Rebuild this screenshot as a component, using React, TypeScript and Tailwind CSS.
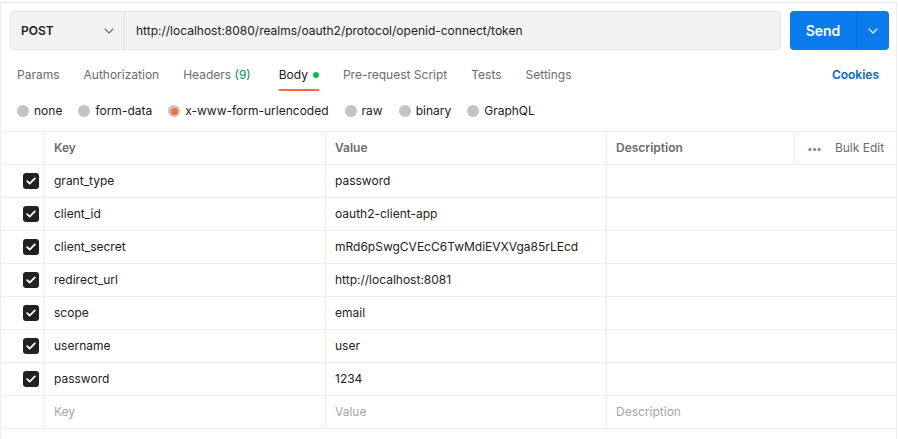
import React from "react";

const ROWS = [
  { key: "grant_type", value: "password" },
  { key: "client_id", value: "oauth2-client-app" },
  { key: "client_secret", value: "mRd6pSwgCVEcC6TwMdiEVXVga85rLEcd" },
  { key: "redirect_url", value: "http://localhost:8081" },
  { key: "scope", value: "email" },
  { key: "username", value: "user" },
  { key: "password", value: "1234" },
];

const TABS = ["Params", "Authorization", "Headers", "Body", "Pre-request Script", "Tests", "Settings"];
const BODY_TYPES = ["none", "form-data", "x-www-form-urlencoded", "raw", "binary", "GraphQL"];

function Chevron({ className }: { className?: string }) {
  return (
    <svg width="10" height="6" viewBox="0 0 10 6" fill="none" className={className}>
      <path d="M1 1l4 4 4-4" stroke="currentColor" strokeWidth="1.1" strokeLinecap="round" strokeLinejoin="round" />
    </svg>
  );
}

function Check() {
  return (
    <div className="w-4 h-4 rounded-[3px] bg-[#212121] flex items-center justify-center">
      <svg width="10" height="8" viewBox="0 0 10 8" fill="none">
        <path d="M1.2 4.2l2.5 2.4L8.8 1.4" stroke="white" strokeWidth="1.8" strokeLinecap="round" strokeLinejoin="round" />
      </svg>
    </div>
  );
}

export default function App() {
  return (
    <div className="w-[899px] h-[439px] bg-white pt-[2px] overflow-hidden text-[12px] text-[#212121]" style={{ fontFamily: "Inter, 'Noto Sans', sans-serif" }}>
      <div className="w-[897px] h-full border-t border-r border-l border-[#ededed]">
        {/** request bar */}
        <div className="flex gap-[9px] pl-[9px] pt-[8px]">
          <div className="w-[771px] h-[39px] flex bg-[#f2f2f2] border border-[#e6e6e6] rounded-[4px]">
            <div className="w-[114px] flex items-center justify-between pl-[10px] pr-[10px] border-r border-[#e0e0e0]">
              <span className="font-semibold text-[#212121]">POST</span>
              <Chevron className="text-[#6b6b6b]" />
            </div>
            <div className="flex items-center pl-[11px] text-[#212121]">
              http://localhost:8080/realms/oauth2/protocol/openid-connect/token
            </div>
          </div>
          <div className="w-[99px] h-[39px] flex bg-[#097bed] rounded-[4px] text-white">
            <div className="w-[67px] flex items-center justify-center border-r border-[#0a6bd0] text-[14px] font-semibold">Send</div>
            <div className="flex-1 flex items-center justify-center">
              <Chevron />
            </div>
          </div>
        </div>

        {/** tabs */}
        <div className="flex items-end justify-between pl-[16px] pr-[17px] h-[41px]">
          <div className="flex gap-[24px]">
            {TABS.map((t) => (
              <div key={t} className={"pb-[5px] border-b-2 " + (t === "Body" ? "ml-[4px] border-[#ff6c37] text-[#212121]" : "border-transparent text-[#6b6b6b]")}>
                {t}
                {t === "Headers" && <span className="text-[#0d8f48]"> (9)</span>}
                {t === "Body" && <span className="inline-block w-[6px] h-[6px] rounded-full bg-[#0cbb52] ml-[5px] mb-[1px]" />}
              </div>
            ))}
          </div>
          <div className="pb-[7px] text-[#0265d2] font-semibold">Cookies</div>
        </div>

        {/** body type */}
        <div className="flex items-center gap-[16px] pl-[16px] h-[40px]">
          {BODY_TYPES.map((b) => (
            <div key={b} className="flex items-center gap-[5px] text-[#212121]">
              {b === "x-www-form-urlencoded" ? (
                <span className="w-[12px] h-[12px] rounded-full bg-[#c4c4c4] flex items-center justify-center">
                  <span className="w-[7px] h-[7px] rounded-full bg-[#ff6c37]" />
                </span>
              ) : (
                <span className="w-[12px] h-[12px] rounded-full bg-[#c4c4c4]" />
              )}
              {b}
            </div>
          ))}
        </div>

        {/** table */}
        <div className="border-t border-[#ededed]">
          <div className="flex h-[33px] border-b border-[#ededed] text-[#6b6b6b] font-semibold">
            <div className="w-[44px] border-r border-[#ededed]" />
            <div className="w-[281px] border-r border-[#ededed] flex items-center pl-[9px]">Key</div>
            <div className="w-[281px] border-r border-[#ededed] flex items-center pl-[9px]">Value</div>
            <div className="w-[188px] border-r border-[#ededed] flex items-center pl-[9px]">Description</div>
            <div className="flex-1 flex items-center pl-[12px] gap-[14px] font-normal">
              <span className="text-[10px] tracking-[-1px] text-[#8a8a8a]">•••</span>
              <span>Bulk Edit</span>
            </div>
          </div>
          {ROWS.map((r) => (
            <div key={r.key} className="flex h-[33px] border-b border-[#ededed]">
              <div className="w-[44px] border-r border-[#ededed] flex items-center justify-end pr-[5px]">
                <Check />
              </div>
              <div className="w-[281px] border-r border-[#ededed] flex items-center pl-[9px]">{r.key}</div>
              <div className="w-[281px] border-r border-[#ededed] flex items-center pl-[9px]">{r.value}</div>
              <div className="flex-1" />
            </div>
          ))}
          <div className="flex h-[33px] border-b border-[#ededed] text-[#a6a6a6]">
            <div className="w-[44px] border-r border-[#ededed]" />
            <div className="w-[281px] border-r border-[#ededed] flex items-center pl-[9px]">Key</div>
            <div className="w-[281px] border-r border-[#ededed] flex items-center pl-[9px]">Value</div>
            <div className="flex-1 flex items-center pl-[9px]">Description</div>
          </div>
        </div>
      </div>
    </div>
  );
}
